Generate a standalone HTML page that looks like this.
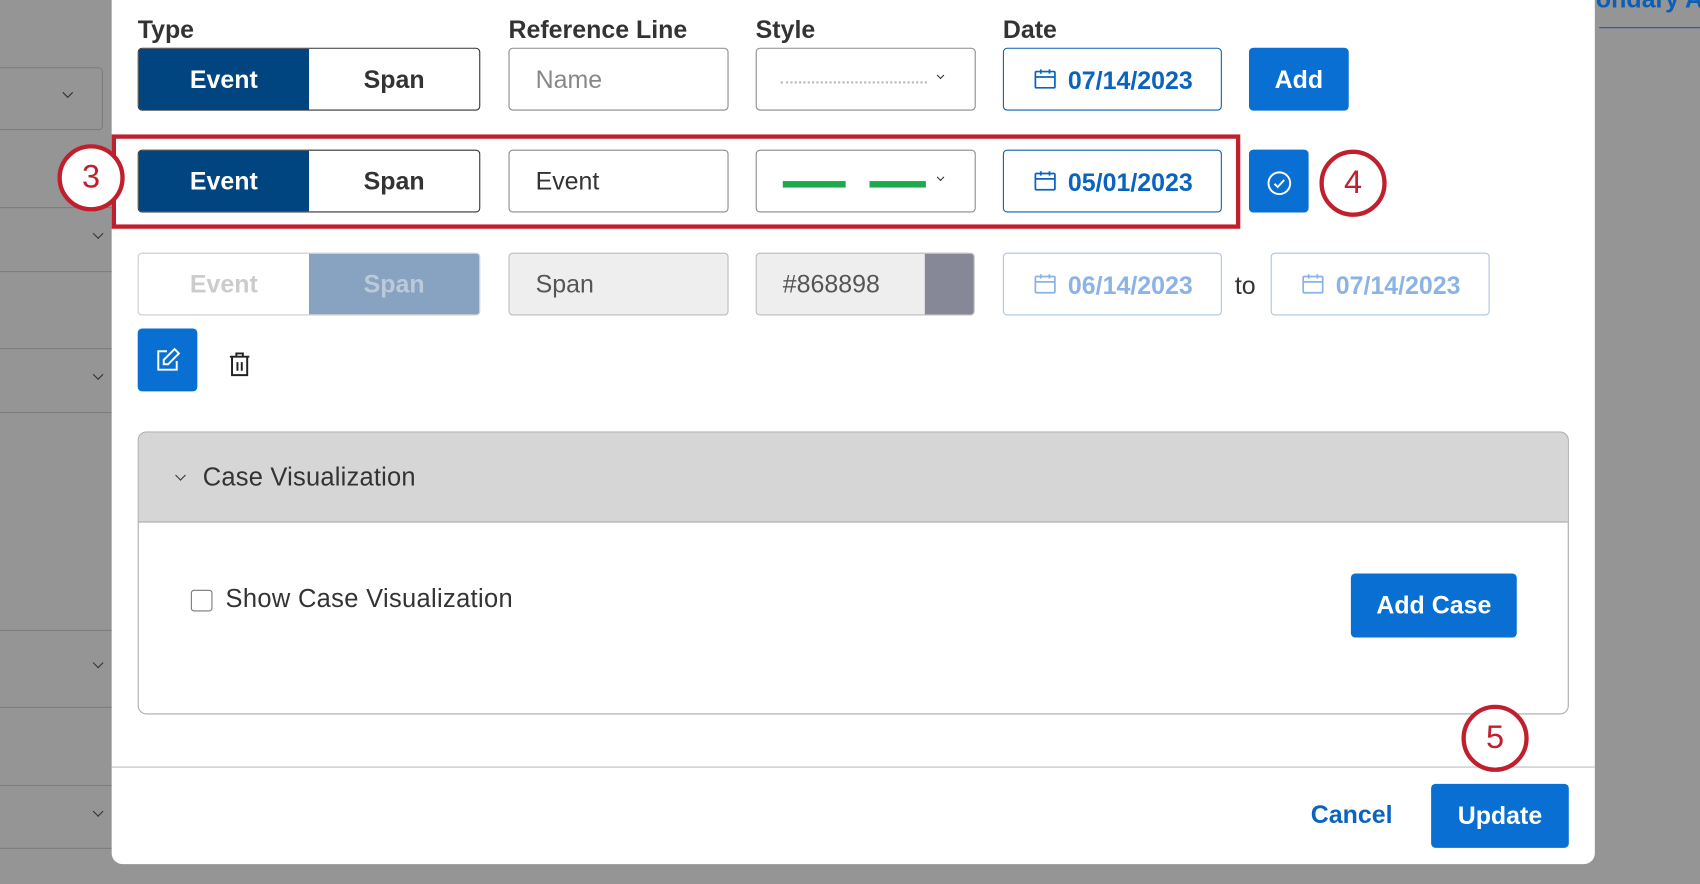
<!DOCTYPE html>
<html><head><meta charset="utf-8"><style>
*{box-sizing:border-box;margin:0;padding:0}
body{width:1700px;height:884px;overflow:hidden;background:#959595;font-family:"Liberation Sans",sans-serif}
#s{position:absolute;left:0;top:0;width:1568px;height:815px;transform:scale(1.08418);transform-origin:0 0;overflow:hidden}
.a{position:absolute}
.hl{position:absolute;left:0;width:103px;height:1px;background:#7d7d7d}
.chev{position:absolute;width:7px;height:7px;border-right:1.5px solid #333;border-bottom:1.5px solid #333;transform:rotate(45deg)}
.lbl{position:absolute;top:14px;font-size:23px;font-weight:bold;color:#333}
.box{position:absolute;height:58px;border:1px solid #8a8a8a;border-radius:4px;background:#fff;font-size:23px;display:flex;align-items:center}
.tog{position:absolute;width:316px;height:58px;border:1px solid #333;border-radius:4px;overflow:hidden;display:flex;font-size:23px;font-weight:bold}
.tog div{flex:1;display:flex;align-items:center;justify-content:center}
.date{position:absolute;width:202px;height:58px;border:1px solid #0b5fb5;border-radius:4px;color:#0b63c0;font-size:23px;font-weight:bold;display:flex;align-items:center;padding-left:27px;padding-top:3px}
.btn{position:absolute;background:#0a6fd3;border-radius:4px;color:#fff;font-weight:bold;font-size:23px;display:flex;align-items:center;justify-content:center}
.circ{position:absolute;width:62px;height:62px;border:4px solid #c0202e;border-radius:50%;background:#fff;color:#c0202e;font-size:30px;display:flex;align-items:center;justify-content:center}
</style></head><body><div id="s">
<div class="a" style="left:-10px;top:62px;width:105px;height:58px;border:1px solid #7d7d7d;border-radius:4px"></div>
<div class="chev" style="left:59px;top:82px"></div>
<div class="hl" style="top:191px"></div><div class="hl" style="top:250px"></div><div class="hl" style="top:321px"></div><div class="hl" style="top:380px"></div><div class="hl" style="top:581px"></div><div class="hl" style="top:652px"></div><div class="hl" style="top:724px"></div><div class="hl" style="top:782px"></div>
<div class="chev" style="left:87px;top:212px"></div><div class="chev" style="left:87px;top:342px"></div><div class="chev" style="left:87px;top:608px"></div><div class="chev" style="left:87px;top:745px"></div>
<div class="a" style="left:1472px;top:-14px;font-size:23px;font-weight:bold;color:#0b5fb5;white-space:nowrap">ondary A</div>
<div class="a" style="left:1475px;top:25px;width:93px;height:1px;background:#0b5fb5"></div>

<div class="a" style="left:103px;top:-10px;width:1368px;height:807px;background:#fff;border-radius:10px"></div>

<div class="lbl" style="left:127px">Type</div><div class="lbl" style="left:469px">Reference Line</div><div class="lbl" style="left:697px">Style</div><div class="lbl" style="left:925px">Date</div>

<div class="tog" style="left:127px;top:44px"><div style="background:#004480;color:#fff">Event</div><div style="color:#333">Span</div></div>
<div class="box" style="left:469px;top:44px;width:203px;padding-left:24px;color:#888">Name</div>
<div class="box" style="left:697px;top:44px;width:203px"><div class="a" style="left:22px;top:30px;width:135px;border-top:2px dotted #bbb"></div><div class="chev" style="left:167px;top:22px;width:5px;height:5px"></div></div>
<div class="date" style="left:925px;top:44px"><svg width="22" height="22" viewBox="0 0 22 22" fill="none" stroke="#0b63c0" stroke-width="1.6" style="margin-right:10px;margin-top:-4px"><rect x="2" y="4" width="18" height="15" rx="1"/><path d="M2 9h18M7 2v4M15 2v4"/></svg>07/14/2023</div>
<div class="btn" style="left:1152px;top:44px;width:92px;height:58px">Add</div>

<div class="a" style="left:103px;top:124px;width:1041px;height:87px;border:4px solid #c0202e"></div>
<div class="tog" style="left:127px;top:138px"><div style="background:#004480;color:#fff">Event</div><div style="color:#333">Span</div></div>
<div class="box" style="left:469px;top:138px;width:203px;padding-left:24px;color:#333">Event</div>
<div class="box" style="left:697px;top:138px;width:203px"><div class="a" style="left:24px;top:28px;width:58px;height:6px;background:#1daa4d"></div><div class="a" style="left:104px;top:28px;width:52px;height:6px;background:#1daa4d"></div><div class="chev" style="left:167px;top:22px;width:5px;height:5px"></div></div>
<div class="date" style="left:925px;top:138px"><svg width="22" height="22" viewBox="0 0 22 22" fill="none" stroke="#0b63c0" stroke-width="1.6" style="margin-right:10px;margin-top:-4px"><rect x="2" y="4" width="18" height="15" rx="1"/><path d="M2 9h18M7 2v4M15 2v4"/></svg>05/01/2023</div>
<div class="btn" style="left:1152px;top:138px;width:55px;height:58px"><svg width="26" height="26" viewBox="0 0 26 26" fill="none" stroke="#fff" stroke-width="1.8" style="margin-top:4px"><circle cx="13" cy="13" r="10"/><path d="M8.5 13.5l3 3 6-6.5"/></svg></div>
<div class="circ" style="left:53px;top:133px">3</div>
<div class="circ" style="left:1217px;top:138px">4</div>

<div class="tog" style="left:127px;top:233px;border-color:#ccc"><div style="color:#ccc">Event</div><div style="background:#88a3c2;color:#bcc9d8">Span</div></div>
<div class="box" style="left:469px;top:233px;width:203px;padding-left:24px;color:#555;background:#eee;border-color:#bbb">Span</div>
<div class="box" style="left:697px;top:233px;width:202px;padding-left:24px;color:#555;background:#eee;border-color:#bbb;overflow:hidden">#868898<div class="a" style="left:155px;top:0;width:47px;height:58px;background:#868898"></div></div>
<div class="date" style="left:925px;top:233px;border-color:#a9c4e3;color:#8bb3e6"><svg width="22" height="22" viewBox="0 0 22 22" fill="none" stroke="#8bb3e6" stroke-width="1.6" style="margin-right:10px;margin-top:-4px"><rect x="2" y="4" width="18" height="15" rx="1"/><path d="M2 9h18M7 2v4M15 2v4"/></svg>06/14/2023</div>
<div class="a" style="left:1139px;top:250px;font-size:23px;color:#333">to</div>
<div class="date" style="left:1172px;top:233px;border-color:#a9c4e3;color:#8bb3e6"><svg width="22" height="22" viewBox="0 0 22 22" fill="none" stroke="#8bb3e6" stroke-width="1.6" style="margin-right:10px;margin-top:-4px"><rect x="2" y="4" width="18" height="15" rx="1"/><path d="M2 9h18M7 2v4M15 2v4"/></svg>07/14/2023</div>

<div class="btn" style="left:127px;top:303px;width:55px;height:58px"><svg width="26" height="26" viewBox="0 0 26 26" fill="none" stroke="#fff" stroke-width="1.8"><path d="M12 5H4v17h17v-8"/><path d="M19 3l4 4-10 10H9v-4z"/></svg></div>
<svg class="a" style="left:209px;top:323px" width="24" height="26" viewBox="0 0 24 26" fill="none" stroke="#222" stroke-width="1.8"><path d="M3 6h18M9 6V3h6v3M5 6v17h14V6M10 11v8M14 11v8"/></svg>

<div class="a" style="left:127px;top:398px;width:1320px;height:261px;border:1px solid #aaa;border-radius:8px;overflow:hidden">
<div class="a" style="left:0;top:0;width:1320px;height:83px;background:#d6d6d6;border-bottom:1px solid #aaa"></div>
<div class="chev" style="left:35px;top:36px;width:7px;height:7px"></div>
<div class="a" style="left:59px;top:28px;font-size:23.5px;color:#333;letter-spacing:0.2px">Case Visualization</div>
<div class="a" style="left:48px;top:145px;width:20px;height:20px;border:1.5px solid #777;border-radius:3px"></div>
<div class="a" style="left:80px;top:140px;font-size:23.5px;color:#333;letter-spacing:0.3px">Show Case Visualization</div>
<div class="btn" style="left:1118px;top:130px;width:153px;height:59px">Add Case</div>
</div>

<div class="a" style="left:103px;top:707px;width:1368px;height:1px;background:#bbb"></div>
<div class="a" style="left:1209px;top:738px;font-size:23px;font-weight:bold;color:#0b63c0">Cancel</div>
<div class="btn" style="left:1320px;top:723px;width:127px;height:59px">Update</div>
<div class="circ" style="left:1348px;top:650px">5</div>
</div></body></html>
